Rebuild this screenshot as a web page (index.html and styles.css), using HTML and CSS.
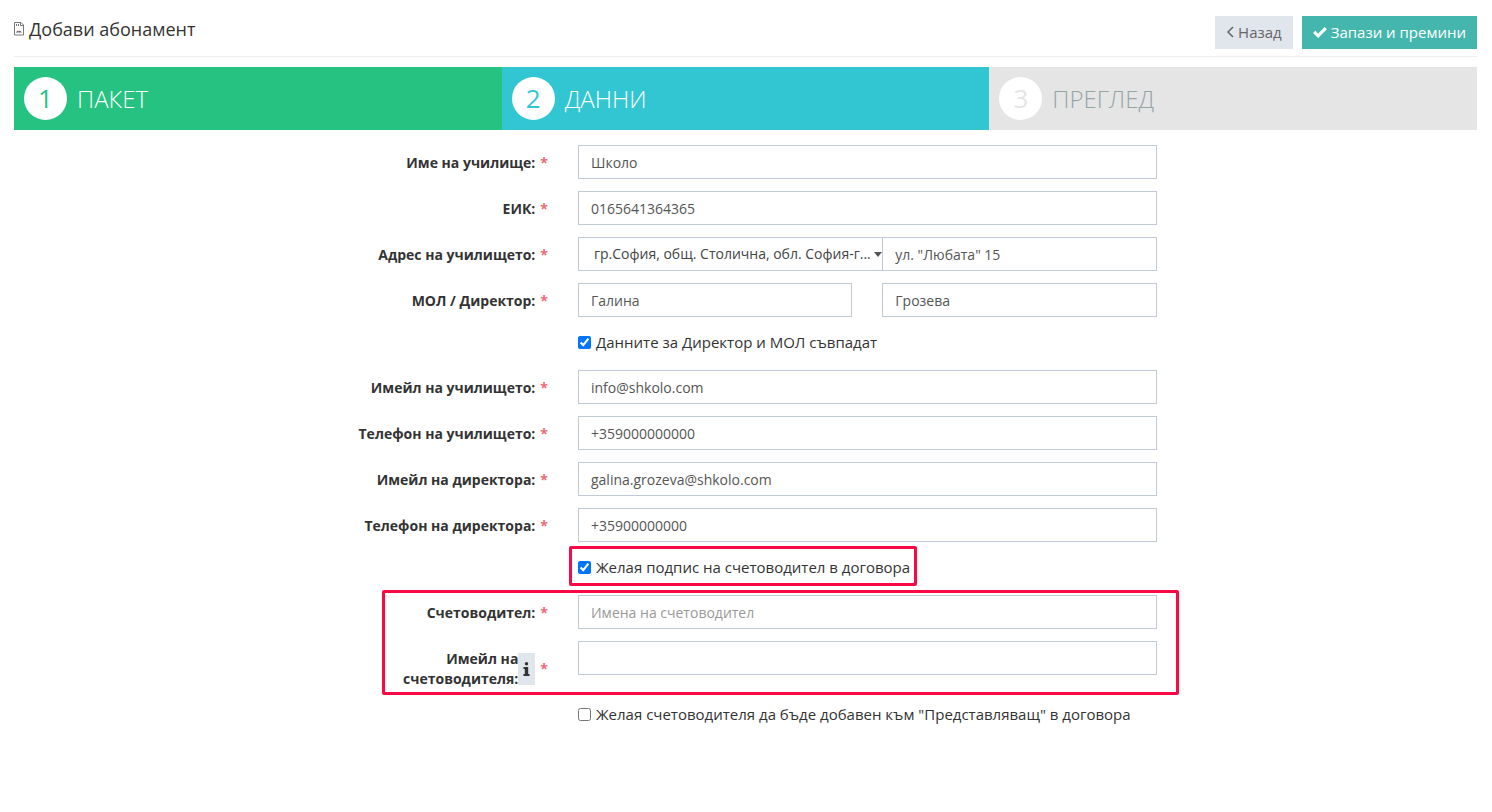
FILE: index.html
```html
<!DOCTYPE html>
<html lang="bg">
<head>
    <meta charset="UTF-8">
    <meta name="viewport" content="width=device-width, initial-scale=1.0">
    <title>Добави абонамент</title>
    <link rel="stylesheet" href="styles.css">
</head>
<body>
    <!-- Page header -->
    <header class="page-header">
        <h1 class="page-title">
            <svg class="title-icon" width="10" height="14" viewBox="0 0 10 14" fill="none" stroke="#777">
                <path d="M.5.5H7L9.5 3v10H.5z"/>
                <path d="M6.500.5v3h3M2.500 2v2M4.500 2v2"/>
                <path d="M2 10.500l1.500-2 1 1L6 8.500l2 2z" fill="#666" stroke="none"/>
            </svg>
            Добави абонамент
        </h1>
        <div class="actions">
            <button type="button" class="btn btn-default">
                <svg width="8" height="12" viewBox="0 0 8 12" fill="none" stroke="#666" stroke-width="1.500"><path d="M7 1L2 6l5 5"/></svg>
                Назад
            </button>
            <button type="submit" form="subscription" class="btn btn-save">
                <svg width="14" height="12" viewBox="0 0 14 12" fill="none" stroke="#fff" stroke-width="3.200"><path d="M1.200 5.800l4 4L12.800 2.200"/></svg>
                Запази и премини
            </button>
        </div>
    </header>

    <!-- Steps -->
    <ol class="steps">
        <li class="step done"><span class="number">1</span>ПАКЕТ</li>
        <li class="step active"><span class="number">2</span>ДАННИ</li>
        <li class="step"><span class="number">3</span>ПРЕГЛЕД</li>
    </ol>

    <form id="subscription" class="form">
        <div class="form-row">
            <div class="label-col"><label for="school">Име на училище:</label><span class="required">*</span></div>
            <input class="control" type="text" id="school" value="Школо">
        </div>
        <div class="form-row">
            <div class="label-col"><label for="eik">ЕИК:</label><span class="required">*</span></div>
            <input class="control" type="text" id="eik" value="0165641364365">
        </div>
        <div class="form-row">
            <div class="label-col"><label for="city">Адрес на училището:</label><span class="required">*</span></div>
            <div class="address">
                <div class="select-wrap">
                    <select class="control" id="city">
                        <option>гр.София, общ. Столична, обл. София-г...</option>
                    </select>
                </div>
                <input class="control" type="text" aria-label="Улица" value="ул. &quot;Любата&quot; 15">
            </div>
        </div>
        <div class="form-row">
            <div class="label-col"><label for="firstName">МОЛ / Директор:</label><span class="required">*</span></div>
            <div class="names">
                <input class="control" type="text" id="firstName" value="Галина">
                <input class="control" type="text" aria-label="Фамилия" value="Грозева">
            </div>
        </div>
        <div class="form-row">
            <div class="check">
                <input type="checkbox" id="sameData" checked>
                <label for="sameData">Данните за Директор и МОЛ съвпадат</label>
            </div>
        </div>
        <div class="form-row">
            <div class="label-col"><label for="schoolEmail">Имейл на училището:</label><span class="required">*</span></div>
            <input class="control" type="text" id="schoolEmail" value="info@shkolo.com">
        </div>
        <div class="form-row">
            <div class="label-col"><label for="schoolPhone">Телефон на училището:</label><span class="required">*</span></div>
            <input class="control" type="text" id="schoolPhone" value="+359000000000">
        </div>
        <div class="form-row">
            <div class="label-col"><label for="directorEmail">Имейл на директора:</label><span class="required">*</span></div>
            <input class="control" type="text" id="directorEmail" value="galina.grozeva@shkolo.com">
        </div>
        <div class="form-row">
            <div class="label-col"><label for="directorPhone">Телефон на директора:</label><span class="required">*</span></div>
            <input class="control" type="text" id="directorPhone" value="+35900000000">
        </div>
        <div class="form-row">
            <div class="check marked">
                <input type="checkbox" id="signature" checked>
                <label for="signature">Желая подпис на счетоводител в договора</label>
            </div>
        </div>

        <!-- Accountant -->
        <div class="accountant">
            <div class="form-row">
                <div class="label-col"><label for="accountant">Счетоводител:</label><span class="required">*</span></div>
                <input class="control" type="text" id="accountant" placeholder="Имена на счетоводител">
            </div>
            <div class="form-row">
                <div class="label-col">
                    <label for="accountantEmail">Имейл на<br>счетоводителя:</label>
                    <button type="button" class="info" aria-label="Информация">
                        <svg width="7" height="14" viewBox="0 0 7 14" fill="#333"><circle cx="3.500" cy="1.700" r="1.700"/><path d="M.5 5h4.700v7H6.500v2H.5v-2h1.300V7H.5z"/></svg>
                    </button>
                    <span class="required">*</span>
                </div>
                <input class="control" type="text" id="accountantEmail">
            </div>
        </div>
        <div class="form-row">
            <div class="check">
                <input type="checkbox" id="representative">
                <label for="representative">Желая счетоводителя да бъде добавен към "Представляващ" в договора</label>
            </div>
        </div>
    </form>
</body>
</html>
```

FILE: styles.css
```css
/* General Styles */
* {
    box-sizing: border-box;
}

body {
    margin: 0;
    padding: 16px 15px 20px 14px;
    background: #fff;
    color: #333;
    font-family: 'Open Sans', sans-serif;
    font-size: 14px;
    line-height: 20px;
}

/* Header */
.page-header {
    display: flex;
    justify-content: space-between;
    align-items: flex-start;
    padding-bottom: 7px;
    border-bottom: 1px solid #eee;
}

.page-title {
    display: flex;
    align-items: center;
    gap: 5px;
    margin: 0;
    font-size: 18px;
    line-height: 26px;
    font-weight: 400;
}

.actions {
    display: flex;
    gap: 9px;
}

.btn {
    display: flex;
    align-items: center;
    gap: 4px;
    height: 33px;
    padding: 0 11px 1px;
    border: 0;
    font-family: inherit;
    font-size: 15px;
    cursor: pointer;
}

.btn-default {
    background: #e1e5ec;
    color: #666;
}

.btn-save {
    background: #44b6ae;
    color: #fff;
}

/* Steps */
.steps {
    display: flex;
    margin: 10px 0 15px;
    padding: 0;
    list-style: none;
}

.step {
    flex: 1;
    display: flex;
    align-items: center;
    gap: 10px;
    padding: 10px;
    background: #e5e5e5;
    color: #95a5a6;
    font-size: 24px;
    font-weight: 300;
}

.number {
    width: 43px;
    height: 43px;
    border-radius: 50%;
    background: #fff;
    color: #e5e5e5;
    font-size: 26px;
    font-weight: 400;
    line-height: 43px;
    text-align: center;
}

.step.done {
    background: #26c281;
    color: #fff;
}

.step.active {
    background: #32c5d2;
    color: #fff;
}

.done .number {
    color: #26c281;
}

.active .number {
    color: #32c5d2;
}

/* Form */
.form-row {
    display: grid;
    grid-template-columns: 36.5% 39.55%;
    column-gap: 30px;
    align-items: start;
    margin-bottom: 12px;
}

.label-col {
    display: flex;
    justify-content: flex-end;
    align-items: center;
    padding-top: 8px;
    text-align: right;
    font-weight: 700;
}

.required {
    margin-left: 5px;
    color: #ed6b75;
}

.control {
    width: 100%;
    min-width: 0;
    height: 34px;
    padding: 6px 12px;
    border: 1px solid #c2cad8;
    border-radius: 0;
    background: #fff;
    color: #555;
    font-family: inherit;
    font-size: 14px;
}

.control::placeholder {
    color: #999;
}

.names {
    display: grid;
    grid-template-columns: 1fr 1fr;
    gap: 30px;
}

.address {
    display: flex;
}

.address > .control {
    flex: 1;
}

.select-wrap {
    position: relative;
    width: calc(50% + 15px);
}

.select-wrap .control {
    appearance: none;
    padding: 0 12px 2px 15px;
    border-right: 0;
    color: #444;
}

/* Dropdown arrow */
.select-wrap::after {
    content: "";
    position: absolute;
    top: 15px;
    right: 0;
    border: 4px solid transparent;
    border-top: 5px solid #555;
    border-bottom: 0;
    pointer-events: none;
}

.info {
    display: flex;
    align-items: center;
    justify-content: center;
    width: 17px;
    height: 32px;
    padding: 0;
    border: 0;
    background: #e1e5ec;
}

/* Checkboxes */
.check {
    grid-column: 2;
    justify-self: start;
    position: relative;
    display: flex;
    align-items: center;
    gap: 5px;
    padding-bottom: 3px;
    font-size: 15px;
    line-height: 26px;
    white-space: nowrap;
}

.check input {
    width: 13px;
    height: 13px;
    margin: 0;
    accent-color: #0075ff;
}

/* Red frames */
.accountant {
    position: relative;
}

.marked::after,
.accountant::after {
    content: "";
    position: absolute;
    border: 3px solid #f90a45;
    border-radius: 2px;
    pointer-events: none;
}

.marked::after {
    inset: -8px -7px -3px -9px;
}

.accountant::after {
    top: -5px;
    bottom: -6px;
    left: 25.150%;
    right: 20.350%;
}
```
